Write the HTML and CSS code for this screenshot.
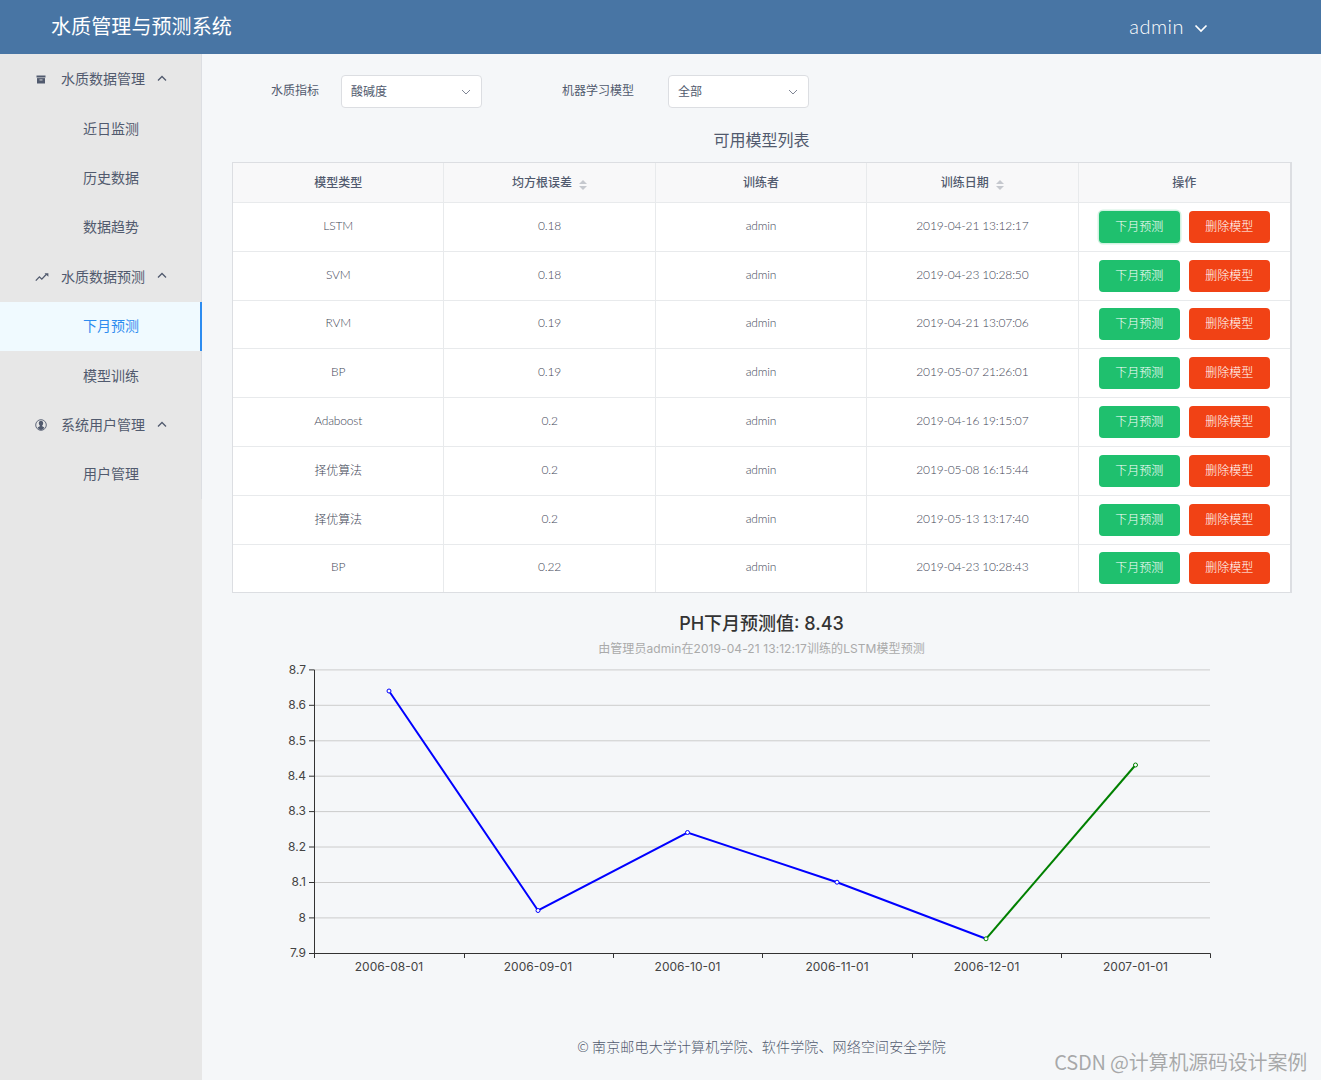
FILE: index.html
```html
<!DOCTYPE html>
<html lang="zh">
<head>
<meta charset="utf-8">
<title>水质管理与预测系统</title>
<link rel="stylesheet" href="styles.css">
</head>
<body>
<header class="topbar">
  <div class="brand">水质管理与预测系统</div>
  <div class="user"><span>admin</span>
    <svg class="user-caret" width="14" height="9" viewBox="0 0 14 9"><path d="M1.500 1.500 7 7l5.500-5.500" fill="none" stroke="#fff" stroke-width="1.700"/></svg>
  </div>
</header>
<div class="layout">
  <aside class="sidebar">
    <nav class="menu">
      <div class="menu-title">
        <svg class="menu-icon" width="12" height="12" viewBox="0 0 12 12"><path d="M1.500 2.500h9v2h-9z" fill="#515a6e"/><path d="M2 5.100h8V10.500H2z" fill="#515a6e"/><path d="M4.500 6.500h3v.9h-3z" fill="#e7e7e7"/></svg>
        <span>水质数据管理</span>
        <svg class="menu-arrow" width="10" height="7" viewBox="0 0 10 7"><path d="M1 5.500 5 1.500l4 4" fill="none" stroke="#515a6e" stroke-width="1.300"/></svg>
      </div>
      <a class="menu-item">近日监测</a>
      <a class="menu-item">历史数据</a>
      <a class="menu-item">数据趋势</a>
      <div class="menu-title">
        <svg class="menu-icon" width="14" height="10" viewBox="0 0 14 10"><path d="M.8 8.600 4.400 4.800l2.400 2.300 4.600-4.900" fill="none" stroke="#515a6e" stroke-width="1.300"/><path d="M9.500 1.200h3.900v3.600z" fill="#515a6e"/></svg>
        <span>水质数据预测</span>
        <svg class="menu-arrow" width="10" height="7" viewBox="0 0 10 7"><path d="M1 5.500 5 1.500l4 4" fill="none" stroke="#515a6e" stroke-width="1.300"/></svg>
      </div>
      <a class="menu-item active">下月预测</a>
      <a class="menu-item">模型训练</a>
      <div class="menu-title">
        <svg class="menu-icon" width="12" height="12" viewBox="0 0 12 12"><circle cx="6" cy="6" r="5.300" fill="none" stroke="#515a6e" stroke-width=".9"/><path d="M6 1.800c-1.500 0-2.200 1-2.200 2.400 0 1 .4 1.800 1 2.300v.8L2.600 8.500C3.400 10 4.600 11 6 11s2.600-1 3.400-2.500L7.200 7.300v-.8c.6-.5 1-1.300 1-2.300C8.200 2.800 7.500 1.800 6 1.800z" fill="#515a6e"/></svg>
        <span>系统用户管理</span>
        <svg class="menu-arrow" width="10" height="7" viewBox="0 0 10 7"><path d="M1 5.500 5 1.500l4 4" fill="none" stroke="#515a6e" stroke-width="1.300"/></svg>
      </div>
      <a class="menu-item">用户管理</a>
    </nav>
  </aside>
  <main class="content">
    <form class="filters">
      <label class="filter-label first">水质指标</label>
      <div class="select"><span>酸碱度</span><svg width="10" height="6" viewBox="0 0 10 6"><path d="M1 1l4 4 4-4" fill="none" stroke="#808695" stroke-width="1"/></svg></div>
      <label class="filter-label second">机器学习模型</label>
      <div class="select"><span>全部</span><svg width="10" height="6" viewBox="0 0 10 6"><path d="M1 1l4 4 4-4" fill="none" stroke="#808695" stroke-width="1"/></svg></div>
    </form>
    <h2 class="list-title">可用模型列表</h2>
    <table class="models">
      <thead>
        <tr>
          <th>模型类型</th>
          <th>均方根误差<span class="sort"><i class="up"></i><i class="down"></i></span></th>
          <th>训练者</th>
          <th>训练日期<span class="sort"><i class="up"></i><i class="down"></i></span></th>
          <th>操作</th>
        </tr>
      </thead>
      <tbody>
        <tr><td>LSTM</td><td>0.18</td><td>admin</td><td>2019-04-21 13:12:17</td><td class="ops"><button class="btn go focus">下月预测</button><button class="btn del">删除模型</button></td></tr>
        <tr><td>SVM</td><td>0.18</td><td>admin</td><td>2019-04-23 10:28:50</td><td class="ops"><button class="btn go">下月预测</button><button class="btn del">删除模型</button></td></tr>
        <tr><td>RVM</td><td>0.19</td><td>admin</td><td>2019-04-21 13:07:06</td><td class="ops"><button class="btn go">下月预测</button><button class="btn del">删除模型</button></td></tr>
        <tr><td>BP</td><td>0.19</td><td>admin</td><td>2019-05-07 21:26:01</td><td class="ops"><button class="btn go">下月预测</button><button class="btn del">删除模型</button></td></tr>
        <tr><td>Adaboost</td><td>0.2</td><td>admin</td><td>2019-04-16 19:15:07</td><td class="ops"><button class="btn go">下月预测</button><button class="btn del">删除模型</button></td></tr>
        <tr><td>择优算法</td><td>0.2</td><td>admin</td><td>2019-05-08 16:15:44</td><td class="ops"><button class="btn go">下月预测</button><button class="btn del">删除模型</button></td></tr>
        <tr><td>择优算法</td><td>0.2</td><td>admin</td><td>2019-05-13 13:17:40</td><td class="ops"><button class="btn go">下月预测</button><button class="btn del">删除模型</button></td></tr>
        <tr><td>BP</td><td>0.22</td><td>admin</td><td>2019-04-23 10:28:43</td><td class="ops"><button class="btn go">下月预测</button><button class="btn del">删除模型</button></td></tr>
      </tbody>
    </table>
    <section class="chart">
      <h3 class="chart-title">PH下月预测值: 8.43</h3>
      <p class="chart-sub">由管理员admin在2019-04-21 13:12:17训练的LSTM模型预测</p>
      <svg class="chart-svg" width="1059" height="320" viewBox="232 660 1059 320">
        <g class="grid">
          <path d="M314 669.900H1210M314 705.300H1210M314 740.800H1210M314 776.200H1210M314 811.600H1210M314 847H1210M314 882.500H1210M314 917.900H1210"/>
        </g>
        <path class="axis" d="M314.500 670V953.500M309 669.900H314.500M309 705.300H314.500M309 740.800H314.500M309 776.200H314.500M309 811.600H314.500M309 847H314.500M309 882.500H314.500M309 917.900H314.500M309 953.500H1210.500M314.500 953.500V958M464.500 953.500V958M613.500 953.500V958M762.500 953.500V958M912.500 953.500V958M1061.500 953.500V958M1210.500 953.500V958"/>
        <g class="ylabels">
          <text x="306" y="673.500">8.7</text><text x="306" y="709">8.6</text><text x="306" y="744.500">8.5</text><text x="306" y="780">8.4</text><text x="306" y="815.300">8.3</text><text x="306" y="850.700">8.2</text><text x="306" y="886.200">8.1</text><text x="306" y="921.600">8</text><text x="306" y="957">7.9</text>
        </g>
        <g class="xlabels">
          <text x="389" y="971">2006-08-01</text><text x="538" y="971">2006-09-01</text><text x="687.500" y="971">2006-10-01</text><text x="837" y="971">2006-11-01</text><text x="986.500" y="971">2006-12-01</text><text x="1135.500" y="971">2007-01-01</text>
        </g>
        <polyline class="line blue" points="389,691 538,910.500 687.500,832.500 837,882.200 986,938.800"/>
        <polyline class="line green" points="986,938.800 1135.500,765"/>
        <g class="dots blue-dots"><circle cx="389" cy="691" r="2"/><circle cx="538" cy="910.500" r="2"/><circle cx="687.500" cy="832.500" r="2"/><circle cx="837" cy="882.200" r="2"/></g>
        <g class="dots green-dots"><circle cx="986" cy="938.800" r="2"/><circle cx="1135.500" cy="765" r="2"/></g>
      </svg>
    </section>
    <footer class="footer">© 南京邮电大学计算机学院、软件学院、网络空间安全学院</footer>
  </main>
</div>
<div class="watermark">CSDN @计算机源码设计案例</div>
</body>
</html>
```
FILE: styles.css
```css
* { box-sizing: border-box; }
html, body { margin: 0; padding: 0; }
body {
  position: relative;
  width: 1321px;
  height: 1080px;
  overflow: hidden;
  display: flex;
  flex-direction: column;
  background: #f5f7f9;
  color: #515a6e;
  font-family: Lato, "Noto Sans CJK SC", sans-serif;
  font-size: 12px;
}
.topbar {
  height: 54px;
  flex: none;
  display: flex;
  align-items: center;
  justify-content: space-between;
  padding: 0 113px 3px 51px;
  background: #4875a4;
  color: #fff;
}
.brand { font-size: 20px; font-weight: 400; letter-spacing: .1px; }
.user { display: flex; align-items: center; gap: 10px; font-size: 20px; font-weight: 300; letter-spacing: .5px; }
.user-caret { margin-top: 5px; }
.layout { flex: 1; display: flex; min-height: 0; }
.sidebar { width: 202px; flex: none; background: #e7e7e7; }
.menu { border-right: 1px solid #dcdee2; padding-top: .6px; }
.menu-title {
  height: 49.400px;
  display: flex;
  align-items: center;
  font-size: 14px;
  padding: 0 0 2px 35px;
  position: relative;
}
.menu-icon { position: absolute; left: 35px; top: 50%; transform: translateY(-50%); }
.menu-title span { margin-left: 26px; }
.menu-arrow { margin-left: 12px; }
.menu-item {
  display: flex;
  align-items: center;
  height: 49.400px;
  padding: 0 0 2px 83px;
  font-size: 14px;
}
.menu-item.active {
  background: #f0faff;
  color: #2d8cf0;
  border-right: 2px solid #2d8cf0;
  margin-right: -1px;
  position: relative;
}
.content { flex: 1; min-width: 0; padding: 21px 30px 0; display: flex; flex-direction: column; }
.filters { display: flex; align-items: center; height: 33px; }
.filter-label { font-size: 12px; padding-bottom: 5px; }
.filter-label.first { margin-left: 39px; margin-right: 22px; }
.filter-label.second { margin-left: 80px; margin-right: 34px; }
.select {
  width: 141px;
  height: 33px;
  display: flex;
  align-items: center;
  justify-content: space-between;
  padding: 0 10px 2px 9px;
  background: #fff;
  border: 1px solid #dcdee2;
  border-radius: 4px;
}
.select svg { margin-top: 2px; }
.list-title {
  margin: 20px 0 10px;
  font-size: 16px;
  font-weight: 400;
  line-height: 24px;
  text-align: center;
  color: #515a6e;
}
.models {
  width: 1060px;
  table-layout: fixed;
  border-collapse: separate;
  border-spacing: 0;
  background: #fff;
  border: 1px solid #dcdee2;
  border-right-width: 2px;
  text-align: center;
}
.models th {
  height: 40px;
  padding: 0 0 3px;
  font-size: 12px;
  font-weight: 500;
  background: #f8f8f9;
  border-right: 1px solid #e8eaec;
  border-bottom: 1px solid #e8eaec;
}
.models td {
  height: 48.800px;
  padding: 0 0 3px;
  font-size: 12px;
  font-weight: 300;
  letter-spacing: -.17px;
  color: #3f4757;
  border-right: 1px solid #e8eaec;
  border-bottom: 1px solid #e8eaec;
}
.models tr:last-child td { border-bottom: 0; height: 47.800px; }
.models th:last-child, .models td:last-child { border-right: 0; }
.sort { display: inline-flex; flex-direction: column; gap: 2px; margin-left: 7px; vertical-align: 3px; }
.sort i { display: block; width: 0; height: 0; border-left: 4px solid transparent; border-right: 4px solid transparent; }
.sort .up { border-bottom: 4px solid #c5c8ce; }
.sort .down { border-top: 4px solid #c5c8ce; }
.models td.ops { padding: 0; letter-spacing: 0; }
.btn {
  width: 81px;
  height: 32px;
  padding: 0 0 3px;
  border: 0;
  border-radius: 4px;
  color: #fff;
  font: 300 12px "Noto Sans CJK SC", sans-serif;
  vertical-align: middle;
}
.go { background: #1fc06e; margin-right: 9px; }
.del { background: #f14215; }
.focus { box-shadow: 0 0 0 1.500px rgba(25, 190, 107, .2); }
.chart { margin-top: 19px; text-align: center; }
.chart-title {
  margin: 0;
  font: 500 18px/24px Inter, "Noto Sans CJK SC", sans-serif;
  color: #333;
}
.chart-sub {
  margin: 5px 0 3px;
  font: 12px/16px Inter, "Noto Sans CJK SC", sans-serif;
  letter-spacing: .08px;
  color: #aaa;
}
.chart-svg { display: block; }
.grid path { fill: none; stroke: #ccc; stroke-width: 1; }
.axis { fill: none; stroke: #333; stroke-width: 1; }
.ylabels text, .xlabels text { font: 12px Inter, "Noto Sans CJK SC", sans-serif; fill: #444; }
.ylabels text { text-anchor: end; }
.xlabels text { text-anchor: middle; }
.line { fill: none; stroke-width: 2; }
.blue { stroke: #00f; }
.green { stroke: #008000; }
.dots circle { fill: #fff; stroke-width: 1; }
.blue-dots circle { stroke: #00f; }
.green-dots circle { stroke: #008000; }
.footer { margin-top: 56px; font-size: 14px; line-height: 20px; letter-spacing: .15px; text-align: center; font-family: "Noto Sans CJK SC", sans-serif; font-weight: 300; }
.watermark {
  position: absolute;
  right: 14px;
  bottom: 5px;
  font: 20px/26px "Noto Sans CJK SC", sans-serif;
  letter-spacing: -.2px;
  color: rgba(90, 90, 90, .5);
}
```
